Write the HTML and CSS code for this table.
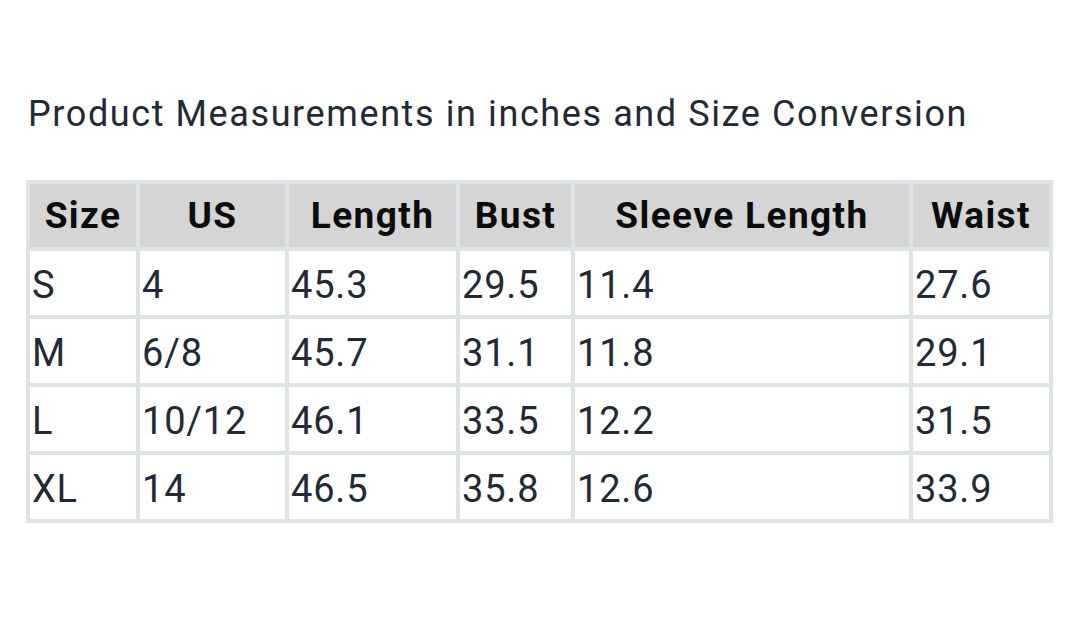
FILE: index.html
```html
<!DOCTYPE html>
<html lang="en">
<head>
<meta charset="utf-8">
<title>Product Measurements</title>
<link rel="stylesheet" href="styles.css">
</head>
<body>
<main class="page">
  <h2 class="title">Product Measurements in inches and Size Conversion</h2>
  <table class="sizes">
    <colgroup>
      <col class="c-size">
      <col class="c-us">
      <col class="c-length">
      <col class="c-bust">
      <col class="c-sleeve">
      <col class="c-waist">
    </colgroup>
    <thead>
      <tr><th>Size</th><th>US</th><th>Length</th><th>Bust</th><th>Sleeve Length</th><th>Waist</th></tr>
    </thead>
    <tbody>
      <tr><td>S</td><td>4</td><td>45.3</td><td>29.5</td><td>11.4</td><td>27.6</td></tr>
      <tr><td>M</td><td>6/8</td><td>45.7</td><td>31.1</td><td>11.8</td><td>29.1</td></tr>
      <tr><td>L</td><td>10/12</td><td>46.1</td><td>33.5</td><td>12.2</td><td>31.5</td></tr>
      <tr><td>XL</td><td>14</td><td>46.5</td><td>35.8</td><td>12.6</td><td>33.9</td></tr>
    </tbody>
  </table>
</main>
</body>
</html>
```

FILE: styles.css
```css
html, body {
  margin: 0;
  padding: 0;
  background: #ffffff;
}

.page {
  padding: 93px 0 0 26px;
  font-family: Roboto, "Liberation Sans", sans-serif;
  color: #222a36;
}

.title {
  margin: 0 0 45px 2px;
  font-size: 36px;
  font-weight: 400;
  line-height: 42px;
  letter-spacing: 1.6px;
  color: #222a36;
}

.sizes {
  width: 1027px;
  table-layout: fixed;
  border-collapse: collapse;
  font-size: 38px;
}

.c-size { width: 110px; }
.c-us { width: 149px; }
.c-length { width: 171px; }
.c-bust { width: 115px; }
.c-sleeve { width: 338px; }
.c-waist { width: 140px; }

.sizes th,
.sizes td {
  border: 4px solid #dde3e7;
  box-sizing: border-box;
  white-space: nowrap;
  overflow: hidden;
}

.sizes th {
  background: #d5d5d5;
  color: #0c0c0c;
  font-weight: 700;
  font-size: 37px;
  letter-spacing: 1.4px;
  text-align: center;
  padding: 0 2px;
  height: 67px;
}

.sizes td {
  text-align: left;
  font-weight: 400;
  padding: 3px 2px 0;
  height: 68px;
  line-height: 44px;
  letter-spacing: 0.8px;
  color: #222a36;
}
```
